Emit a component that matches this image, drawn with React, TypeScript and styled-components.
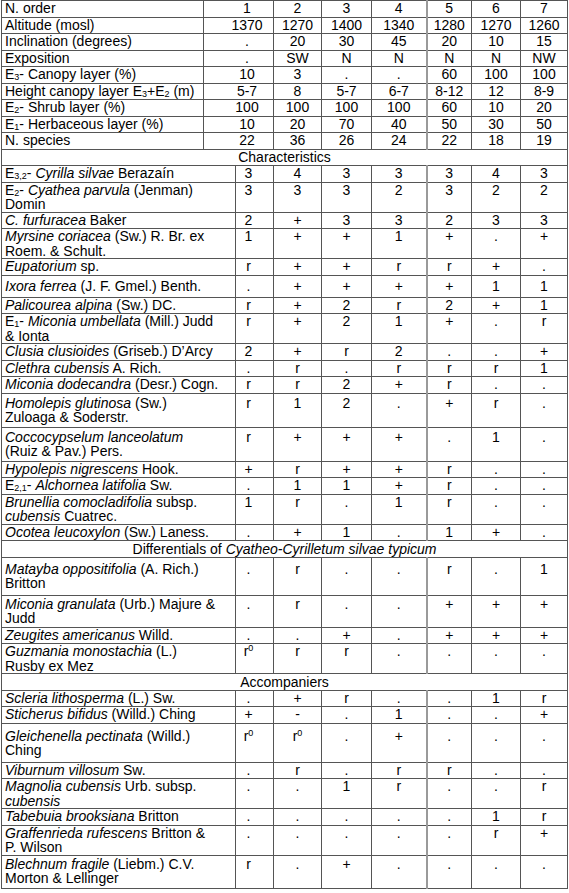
import React from 'react';
import styled, { createGlobalStyle } from 'styled-components';

const GlobalStyle = createGlobalStyle`
  body {
    margin: 0;
    background: #ffffff;
  }
`;

type Value = string;
// h: row height in px, pt: extra space above the text in taller rows
type SiteRow = { label: React.ReactNode; values: Value[]; h?: number; pt?: number };

const Sp = styled.i`
  font-style: italic;
`;

const Sub = styled.sub`
  font-size: 9px;
  vertical-align: -1px;
  line-height: 0;
`;

const Sup = styled.sup`
  font-size: 9px;
  vertical-align: 5px;
  line-height: 0;
`;

const siteRows: SiteRow[] = [
  { label: 'N. order', values: ['1', '2', '3', '4', '5', '6', '7'] },
  { label: 'Altitude (mosl)', values: ['1370', '1270', '1400', '1340', '1280', '1270', '1260'] },
  { label: 'Inclination (degrees)', values: ['.', '20', '30', '45', '20', '10', '15'] },
  { label: 'Exposition', values: ['.', 'SW', 'N', 'N', 'N', 'N', 'NW'] },
  { label: <>E<Sub>3</Sub>- Canopy layer (%)</>, values: ['10', '3', '.', '.', '60', '100', '100'] },
  {
    label: <>Height canopy layer E<Sub>3</Sub>+E<Sub>2</Sub> (m)</>,
    values: ['5-7', '8', '5-7', '6-7', '8-12', '12', '8-9'],
  },
  { label: <>E<Sub>2</Sub>- Shrub layer (%)</>, values: ['100', '100', '100', '100', '60', '10', '20'] },
  { label: <>E<Sub>1</Sub>- Herbaceous layer (%)</>, values: ['10', '20', '70', '40', '50', '30', '50'] },
  { label: 'N. species', values: ['22', '36', '26', '24', '22', '18', '19'] },
];

type Section = { title: React.ReactNode; rows: SiteRow[] };

const sections: Section[] = [
  {
    title: 'Characteristics',
    rows: [
      { label: <>E<Sub>3,2</Sub>- <Sp>Cyrilla silvae</Sp> Berazaín</>, values: ['3', '4', '3', '3', '3', '4', '3'] },
      { label: <>E<Sub>2</Sub>- <Sp>Cyathea parvula</Sp> (Jenman)<br />Domin</>, values: ['3', '3', '3', '2', '3', '2', '2'], h: 30 },
      { label: <><Sp>C. furfuracea</Sp> Baker</>, values: ['2', '+', '3', '3', '2', '3', '3'] },
      { label: <><Sp>Myrsine coriacea</Sp> (Sw.) R. Br. ex<br />Roem. &amp; Schult.</>, values: ['1', '+', '+', '1', '+', '.', '+'], h: 30 },
      { label: <><Sp>Eupatorium</Sp> sp.</>, values: ['r', '+', '+', 'r', 'r', '+', '.'] },
      { label: <><Sp>Ixora ferrea</Sp> (J. F. Gmel.) Benth.</>, values: ['.', '+', '+', '+', '+', '1', '1'], h: 22, pt: 3 },
      { label: <><Sp>Palicourea alpina</Sp> (Sw.) DC.</>, values: ['r', '+', '2', 'r', '2', '+', '1'] },
      { label: <>E<Sub>1</Sub>- <Sp>Miconia umbellata</Sp> (Mill.) Judd<br />&amp; Ionta</>, values: ['r', '+', '2', '1', '+', '.', 'r'], h: 30 },
      { label: <><Sp>Clusia clusioides</Sp> (Griseb.) D’Arcy</>, values: ['2', '+', 'r', '2', '.', '.', '+'] },
      { label: <><Sp>Clethra cubensis</Sp> A. Rich.</>, values: ['.', 'r', '.', 'r', 'r', 'r', '1'] },
      { label: <><Sp>Miconia dodecandra</Sp> (Desr.) Cogn.</>, values: ['r', 'r', '2', '+', 'r', '.', '.'] },
      { label: <><Sp>Homolepis glutinosa</Sp> (Sw.)<br />Zuloaga &amp; Soderstr.</>, values: ['r', '1', '2', '.', '+', 'r', '.'], h: 34, pt: 2 },
      { label: <><Sp>Coccocypselum lanceolatum</Sp><br />(Ruiz &amp; Pav.) Pers.</>, values: ['r', '+', '+', '+', '.', '1', '.'], h: 34, pt: 2 },
      { label: <><Sp>Hypolepis nigrescens</Sp> Hook.</>, values: ['+', 'r', '+', '+', 'r', '.', '.'] },
      { label: <>E<Sub>2,1</Sub>- <Sp>Alchornea latifolia</Sp> Sw.</>, values: ['.', '1', '1', '+', 'r', '.', '.'] },
      { label: <><Sp>Brunellia comocladifolia</Sp> subsp.<br /><Sp>cubensis</Sp> Cuatrec.</>, values: ['1', 'r', '.', '1', 'r', '.', '.'], h: 30 },
      { label: <><Sp>Ocotea leucoxylon</Sp> (Sw.) Laness.</>, values: ['.', '+', '1', '.', '1', '+', '.'] },
    ],
  },
  {
    title: <>Differentials of <Sp>Cyatheo-Cyrilletum silvae typicum</Sp></>,
    rows: [
      { label: <><Sp>Matayba oppositifolia</Sp> (A. Rich.)<br />Britton</>, values: ['.', 'r', '.', '.', 'r', '.', '1'], h: 38, pt: 4 },
      { label: <><Sp>Miconia granulata</Sp> (Urb.) Majure &amp;<br />Judd</>, values: ['.', 'r', '.', '.', '+', '+', '+'], h: 32, pt: 1 },
      { label: <><Sp>Zeugites americanus</Sp> Willd.</>, values: ['.', '.', '+', '.', '+', '+', '+'] },
      { label: <><Sp>Guzmania monostachia</Sp> (L.)<br />Rusby ex Mez</>, values: ['r0', 'r', 'r', '.', '.', '.', '.'], h: 30 },
    ],
  },
  {
    title: 'Accompaniers',
    rows: [
      { label: <><Sp>Scleria lithosperma</Sp> (L.) Sw.</>, values: ['.', '+', 'r', '.', '.', '1', 'r'] },
      { label: <><Sp>Sticherus bifidus</Sp> (Willd.) Ching</>, values: ['+', '-', '.', '1', '.', '.', '+'] },
      { label: <><Sp>Gleichenella pectinata</Sp> (Willd.)<br />Ching</>, values: ['r0', 'r0', '.', '+', '.', '.', '.'], h: 39, pt: 5 },
      { label: <><Sp>Viburnum villosum</Sp> Sw.</>, values: ['.', 'r', '.', 'r', 'r', '.', '.'] },
      { label: <><Sp>Magnolia cubensis</Sp> Urb. subsp.<br /><Sp>cubensis</Sp></>, values: ['.', '.', '1', 'r', '.', '.', 'r'], h: 30 },
      { label: <><Sp>Tabebuia brooksiana</Sp> Britton</>, values: ['.', '.', '.', '.', '.', '1', 'r'] },
      { label: <><Sp>Graffenrieda rufescens</Sp> Britton &amp;<br />P. Wilson</>, values: ['.', '.', '.', '.', '.', 'r', '+'], h: 30 },
      { label: <><Sp>Blechnum fragile</Sp> (Liebm.) C.V.<br />Morton &amp; Lellinger</>, values: ['r', '.', '+', '.', '.', '.', '.'], h: 33, pt: 1 },
    ],
  },
];

// column edges in the picture: 1 | 203 | 235 | 273 | 321 | 371 | 426 | 471 | 520 | 567
const colWidths = [202, 32, 38, 48, 50, 55, 45, 49, 47];

const Sheet = styled.div`
  padding: 0 0 0 1px;
  font-family: 'Liberation Sans', Arial, sans-serif;
  font-size: 14px;
  color: #000;
`;

const RelevesTable = styled.table`
  width: 566px;
  table-layout: fixed;
  border-collapse: collapse;
`;

const Row = styled.tr<{ $h: number; $pt: number }>`
  height: ${(p) => p.$h}px;

  & > td {
    padding-top: ${(p) => p.$pt}px;
  }
`;

const LabelCell = styled.td`
  border: 1px solid #555;
  padding: 0 3px;
  line-height: 14.5px;
  vertical-align: top;
  text-align: left;
  white-space: nowrap;
  overflow: hidden;
`;

// $lead: 'top' for the wide first value column of the site rows,
// 'list' for the narrow first value column of the species rows
const ValueCell = styled.td<{ $split?: boolean; $lead?: 'top' | 'list' }>`
  border: 1px solid #555;
  ${(p) => (p.$split ? 'border-left: 2px solid #9a9a9a;' : '')}
  padding: 0;
  ${(p) => (p.$lead === 'top' ? 'padding-left: 17px;' : '')}
  ${(p) => (p.$lead === 'list' ? 'padding-right: 12px;' : '')}
  line-height: 14.5px;
  vertical-align: top;
  text-align: center;
`;

const SectionCell = styled.td`
  border: 1px solid #555;
  padding: 0;
  line-height: 14.5px;
  text-align: center;
`;

const renderValue = (v: Value) =>
  v === 'r0' ? (
    <>
      r<Sup>0</Sup>
    </>
  ) : (
    v
  );

export default function App() {
  return (
    <Sheet>
      <GlobalStyle />
      <RelevesTable>
        <colgroup>
          {colWidths.map((w, i) => (
            <col key={i} style={{ width: w }} />
          ))}
        </colgroup>
        <tbody>
          {siteRows.map((r, i) => (
            <Row key={`s${i}`} $h={16.5} $pt={0}>
              <LabelCell>{r.label}</LabelCell>
              {r.values.map((v, j) => (
                <ValueCell
                  key={j}
                  colSpan={j === 0 ? 2 : 1}
                  $split={j === 4}
                  $lead={j === 0 ? 'top' : undefined}
                >
                  {renderValue(v)}
                </ValueCell>
              ))}
            </Row>
          ))}
          {sections.map((s, si) => (
            <React.Fragment key={`sec${si}`}>
              <Row $h={16.5} $pt={0}>
                <SectionCell colSpan={9}>{s.title}</SectionCell>
              </Row>
              {s.rows.map((r, i) => (
                <Row key={i} $h={r.h ?? 16.5} $pt={r.pt ?? 0}>
                  <LabelCell colSpan={2}>{r.label}</LabelCell>
                  {r.values.map((v, j) => (
                    <ValueCell key={j} $split={j === 4} $lead={j === 0 ? 'list' : undefined}>
                      {renderValue(v)}
                    </ValueCell>
                  ))}
                </Row>
              ))}
            </React.Fragment>
          ))}
        </tbody>
      </RelevesTable>
    </Sheet>
  );
}
